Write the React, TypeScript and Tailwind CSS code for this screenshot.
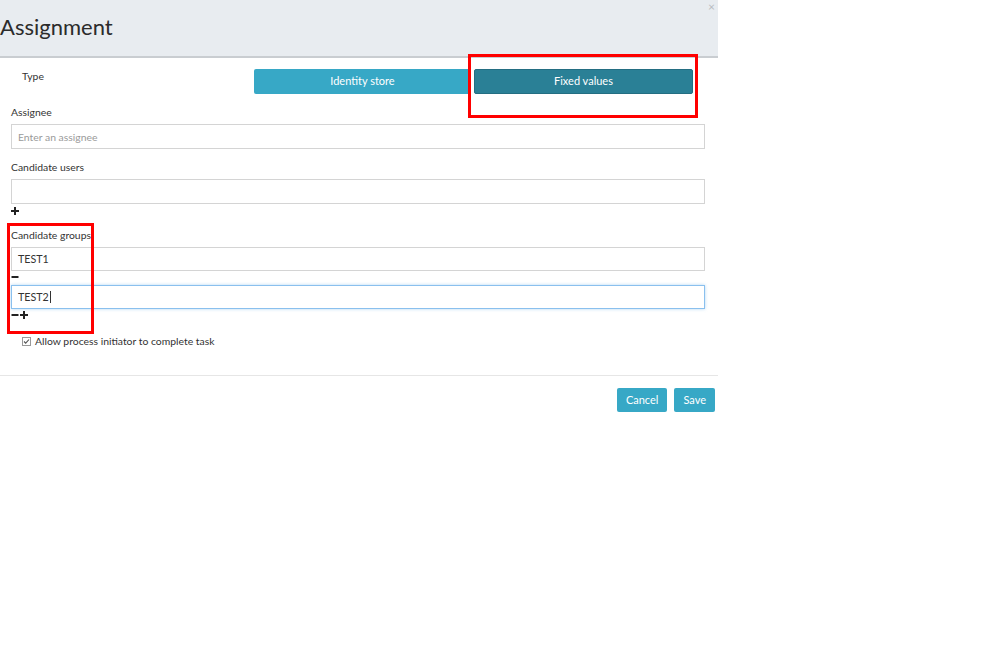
import React from 'react';

const font = { fontFamily: 'Lato, "Open Sans", sans-serif' };

function Label({ children }: { children: React.ReactNode }) {
  return <label className="block h-[12px] text-[10.4px] leading-[12px] text-[#333] mb-[6px]">{children}</label>;
}

function Plus() {
  return (
    <svg width="8" height="8" viewBox="0 0 8 8" className="block">
      <path d="M3 0h2v3h3v2H5v3H3V5H0V3h3z" fill="#222" />
    </svg>
  );
}

function Minus() {
  return (
    <svg width="8" height="8" viewBox="0 0 8 8" className="block">
      <path d="M0.5 3h7v2h-7z" fill="#222" />
    </svg>
  );
}

export default function App() {
  return (
    <div className="relative w-[999px] h-[666px] bg-white overflow-hidden" style={font}>
      <div className="w-[718px]">
        {/* Header */}
        <div className="relative h-[58px] bg-[#e8ecf0] border-b-2 border-[#c9cdd1]">
          <h1 className="pt-[12px] text-[22px] leading-[30px] text-[#2b2b2b]">Assignment</h1>
          <span className="absolute right-[3px] top-[0px] text-[12px] leading-[13px] text-[#b8bcc0]">×</span>
        </div>

        {/* Body */}
        <div className="px-[11px] pt-[11px] text-[#333]">
          <div className="flex items-start">
            <div className="w-[243px] pl-[11px] text-[10.4px] leading-[14px]">Type</div>
            <div className="flex gap-[3px]">
              <button className="w-[217px] h-[25px] rounded-[2px] bg-[#37a8c6] text-white text-[11px]">Identity store</button>
              <button className="w-[219px] h-[25px] rounded-[2px] bg-[#2a8096] border border-[#246e82] text-white text-[11px]">Fixed values</button>
            </div>
          </div>

          <div className="mt-[12px]">
            <Label>Assignee</Label>
            <input
              placeholder="Enter an assignee"
              className="block h-[25px] w-[694px] border border-[#d4d4d4] px-[6px] text-[10.4px] placeholder:text-[#9a9a9a] outline-none"
            />
          </div>

          <div className="mt-[12px]">
            <Label>Candidate users</Label>
            <div className="h-[25px] w-[694px] border border-[#d4d4d4]" />
            <div className="pt-[3px] h-[13px]"><Plus /></div>
          </div>

          <div className="mt-[12px]">
            <Label>Candidate groups</Label>
            <div className="h-[24px] w-[694px] border border-[#d4d4d4] px-[6px] flex items-center text-[10.7px]">TEST1</div>
            <div className="pt-[2px] h-[14px]"><Minus /></div>
            <div className="h-[24px] w-[694px] border border-[#8ac0ee] shadow-[0_0_3px_rgba(102,175,233,0.5)] px-[6px] flex items-center text-[10.7px]">
              TEST2<span className="w-px h-[12px] bg-[#333] ml-px" />
            </div>
            <div className="pt-[2px] h-[14px] flex gap-[1px]"><Minus /><Plus /></div>
          </div>

          <div className="mt-[12px] h-[12px] pl-[11px] flex items-center gap-[4px] text-[10.4px] leading-[12px]">
            <span className="w-[9px] h-[9px] border border-[#999] flex items-center justify-center">
              <svg width="7" height="7" viewBox="0 0 7 7"><path d="M1 3.5l1.7 1.7L6 1.5" stroke="#555" strokeWidth="1.1" fill="none" /></svg>
            </span>
            Allow process initiator to complete task
          </div>
        </div>

        <div className="mt-[28px] border-t border-[#e6e6e6]" />

        <div className="flex justify-end gap-[7px] pr-[3px] pt-[12px]">
          <button className="h-[24px] px-[9px] rounded-[2px] bg-[#37a8c6] text-white text-[11px]">Cancel</button>
          <button className="h-[24px] px-[9px] rounded-[2px] bg-[#37a8c6] text-white text-[11px]">Save</button>
        </div>
      </div>

      {/* Annotation boxes */}
      <div className="absolute left-[468px] top-[54px] w-[230px] h-[64px] border-[3px] border-[#ff0000]" />
      <div className="absolute left-[7px] top-[223px] w-[87px] h-[111px] border-[3px] border-[#ff0000]" />
    </div>
  );
}
